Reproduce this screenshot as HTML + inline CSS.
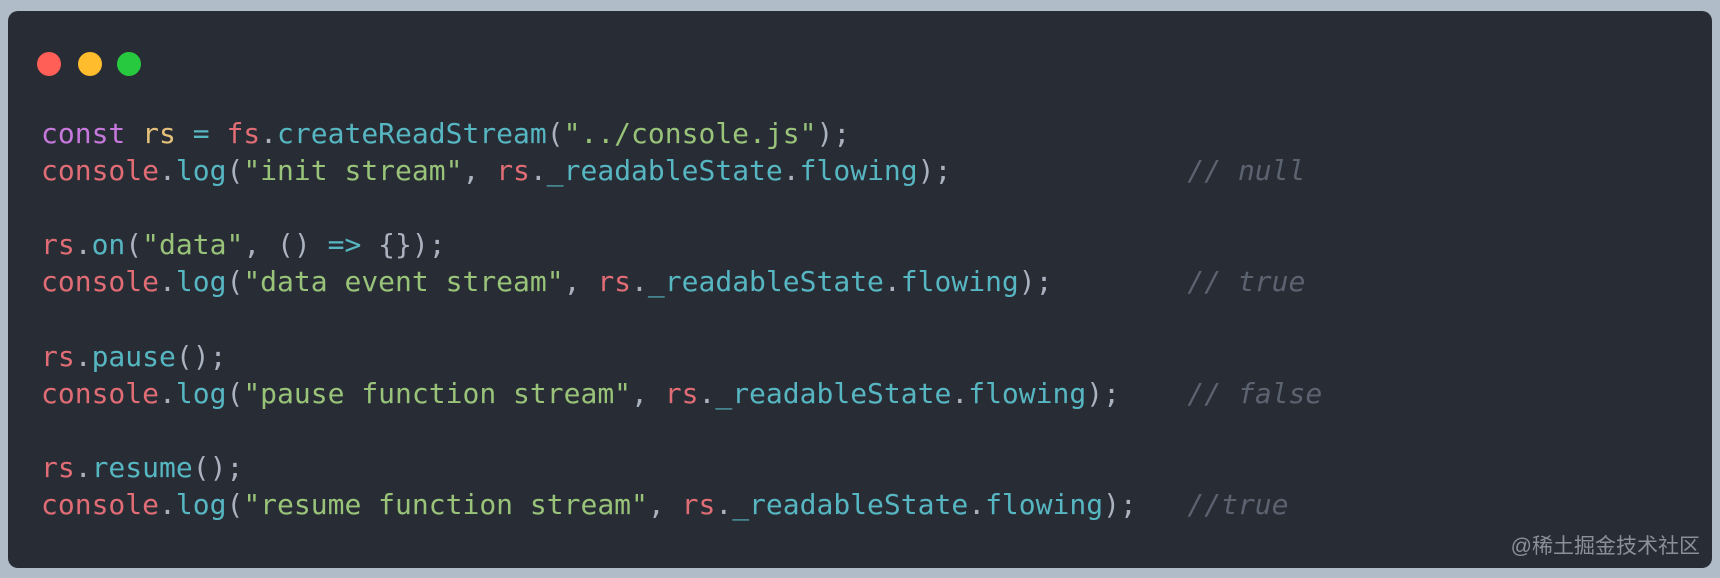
<!DOCTYPE html>
<html><head><meta charset="utf-8"><style>
html,body{margin:0;padding:0}
body{width:1720px;height:578px;background:#b0bcc8;position:relative;overflow:hidden}
.card{position:absolute;left:8px;top:11px;width:1704px;height:557px;background:#282c34;border-radius:10px}
.dot{position:absolute;top:41px;width:24px;height:24px;border-radius:50%}
pre{position:absolute;left:33px;top:104px;margin:0;font-family:"DejaVu Sans Mono","Liberation Mono",monospace;font-size:28px;line-height:37.1px;color:#abb2bf}
.k{color:#c678dd}.v{color:#e5c07b}.r{color:#e06c75}.f{color:#56b6c2}.s{color:#98c379}.c{color:#5c6370;font-style:italic}
.wm{position:absolute;right:20px;top:530px;font-family:"Liberation Sans","Noto Sans CJK SC",sans-serif;font-size:21px;color:#8a9099}
</style></head><body>
<div class="card">
<div class="dot" style="left:29px;background:#ff5f56"></div>
<div class="dot" style="left:70px;background:#ffbd2e"></div>
<div class="dot" style="left:109px;background:#27c93f"></div>
<pre><span class="k">const</span> <span class="v">rs</span> <span class="f">=</span> <span class="r">fs</span>.<span class="f">createReadStream</span>(<span class="s">"../console.js"</span>);
<span class="r">console</span>.<span class="f">log</span>(<span class="s">"init stream"</span>, <span class="r">rs</span>.<span class="f">_readableState</span>.<span class="f">flowing</span>);              <span class="c">// null</span>

<span class="r">rs</span>.<span class="f">on</span>(<span class="s">"data"</span>, () <span class="f">=&gt;</span> {});
<span class="r">console</span>.<span class="f">log</span>(<span class="s">"data event stream"</span>, <span class="r">rs</span>.<span class="f">_readableState</span>.<span class="f">flowing</span>);        <span class="c">// true</span>

<span class="r">rs</span>.<span class="f">pause</span>();
<span class="r">console</span>.<span class="f">log</span>(<span class="s">"pause function stream"</span>, <span class="r">rs</span>.<span class="f">_readableState</span>.<span class="f">flowing</span>);    <span class="c">// false</span>

<span class="r">rs</span>.<span class="f">resume</span>();
<span class="r">console</span>.<span class="f">log</span>(<span class="s">"resume function stream"</span>, <span class="r">rs</span>.<span class="f">_readableState</span>.<span class="f">flowing</span>);   <span class="c">//true</span></pre>
</div>
<div class="wm">@稀土掘金技术社区</div>
</body></html>
